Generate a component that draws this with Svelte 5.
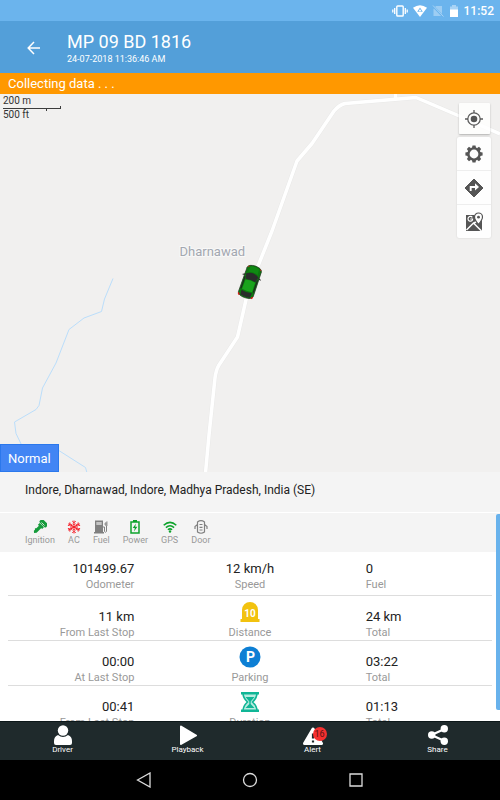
<script>
  const rows = [
    { left: ['11 km', 'From Last Stop'], icon: 'distance', name: 'Distance', right: '24 km' },
    { left: ['00:00', 'At Last Stop'], icon: 'parking', name: 'Parking', right: '03:22' },
    { left: ['00:41', 'From Last Stop'], icon: 'duration', name: 'Duration', right: '01:13' }
  ];
  const sensors = ['Ignition', 'AC', 'Fuel', 'Power', 'GPS', 'Door'];
  const tabs = ['Driver', 'Playback', 'Alert', 'Share'];
</script>

<div class="screen">
  <div class="status">
    <svg width="16" height="12" viewBox="0 0 16 12" fill="none" stroke="#fff">
      <rect x="4.8" y="1" width="6.4" height="10" rx="0.8" stroke-width="1.4" />
      <path d="M2.7 3v6M13.3 3v6M0.8 4.5v3M15.2 4.5v3" stroke-width="1.3" />
    </svg>
    <svg width="14" height="12" viewBox="0 0 14 12">
      <path d="M0 2.8Q7-2.2 14 2.8L7 12Z" fill="#fff" />
      <path d="M7 2.6L9.8 6.8H4.2Z" fill="#6bb4ed" /><circle cx="7" cy="5.4" r="1" fill="#fff" />
    </svg>
    <svg width="12" height="12" viewBox="0 0 12 12">
      <path d="M4 1h6v10H1.5V4Z" fill="#9dcdf3" />
      <path d="M0.5 0.5l10.5 11" stroke="#6bb4ed" stroke-width="2" /><path d="M1 0.5l10.5 11" stroke="#a8d3f5" />
    </svg>
    <svg width="10" height="12" viewBox="0 0 10 12">
      <path d="M3 0h4v1.5h2V5H1V1.5h2Z" fill="#a8d3f5" /><path d="M1 4.5h8V12H1Z" fill="#fff" />
    </svg>
    <time>11:52</time>
  </div>

  <header>
    <button class="back" aria-label="Back">
      <svg width="14" height="14" viewBox="0 0 14 14" fill="none" stroke="#fff" stroke-width="1.5"><path d="M7 1L1.2 7L7 13M1.2 7H13" /></svg>
    </button>
    <div>
      <h1>MP 09 BD 1816</h1>
      <p>24-07-2018 11:36:46 AM</p>
    </div>
  </header>
  <div class="notice">Collecting data . . .</div>

  <main class="map">
    <svg class="ground" viewBox="0 94 500 378" preserveAspectRatio="xMidYMid slice">
      <g fill="none" stroke-linejoin="round">
        <path d="M113 278.500L104.500 299L101.500 311.500L84 318L69 329.500L56 363L42.500 388L39 405.500L36 409.500L14.500 422L16 433.500L24 450L58 450L85.500 467.500L87 473" stroke="#bbdefb" />
        <g id="roads">
          <path d="M205.500 473L209 435L215 378Q216 370 219 365L237.500 337L248 291L272 231L297 161L312 143.500L334 111Q339 105 345 103.500L416 97.500L457 115L500 134M395.500 93v6" stroke="#e9e9e8" stroke-width="4.500" />
          <path d="M205.500 473L209 435L215 378Q216 370 219 365L237.500 337L248 291L272 231L297 161L312 143.500L334 111Q339 105 345 103.500L416 97.500L457 115L500 134M395.500 93v6" stroke="#fff" stroke-width="3.500" />
        </g>
      </g>
      <text x="179.500" y="256">Dharnawad</text>
      <g transform="translate(250 282) rotate(19)">
        <path d="M-7.500-13Q-7-16.500 0-16.800Q7-16.500 7.500-13L7.800 13Q7 16.300 0 16.500Q-7 16.300-7.800 13Z" fill="#0c780f" stroke="#203a20" stroke-width="0.700" />
        <path d="M-4.500-15Q0-16.500 4.500-15L5-9Q0-11-5-9Z" fill="#0f8a13" />
        <path d="M-6.500-7Q0-11.500 6.500-7L5-1.500Q0-3-5-1.500Z" fill="#292c2b" />
        <path d="M-5-1Q0-2.500 5-1L5.300 9Q0 10-5.300 9Z" fill="#1aa31c" />
        <path d="M-5.500 10Q0 11.500 5.500 10L5 15Q0 16-5 15Z" fill="#292c2b" />
        <path d="M-6.500-4V9M6.500-4V9" stroke="#222" /><path d="M-9.500-5l2.500-1M9.500-5l-2.500-1" stroke="#222" />
        <path d="M-7.500 13.500l1 2M7.500 13.500l-1 2" stroke="#e21818" stroke-width="1.500" />
        <path d="M-7-14l1.500-1M7-14l-1.500-1" stroke="#a33418" />
      </g>
    </svg>
    <div class="scale">
      <span>200 m</span>
      <svg width="58" height="6" viewBox="0 0 58 6" fill="none" stroke="#3c3c3c"><path d="M0 3.500H57.500M57.500 1v3M43.500 3v3" /></svg>
      <span>500 ft</span>
    </div>
    <div class="tools">
      <button class="locate" aria-label="My location">
        <svg width="18" height="18" viewBox="0 0 18 18" fill="none" stroke="#5c5c5c" stroke-width="1.300"><circle cx="9" cy="9" r="6.200" /><circle cx="9" cy="9" r="3.300" fill="#555" stroke="none" /><path d="M9 0v3M9 15v3M0 9h3M15 9h3" /></svg>
      </button>
      <div class="group">
        <button aria-label="Settings">
          <svg width="18" height="18" viewBox="-9 -9 18 18" fill="#555">
            <circle r="5.600" fill="none" stroke="#555" stroke-width="2.400" />
            {#each [0, 45, 90, 135, 180, 225, 270, 315] as turn}
              <path d="M-2-6L-1.500-8.600H1.500L2-6Z" transform={`rotate(${turn})`} />
            {/each}
          </svg>
        </button>
        <button aria-label="Directions">
          <svg width="20" height="20" viewBox="0 0 20 20"><path d="M10 1L19 10L10 19L1 10Z" fill="#555" stroke="#555" stroke-linejoin="round" /><path d="M6.700 13V9H12" fill="none" stroke="#fff" stroke-width="1.900" /><path d="M11 5.300L15 9L11 12.500Z" fill="#fff" /></svg>
        </button>
        <button aria-label="Open in maps">
          <svg width="18" height="20" viewBox="0 0 18 20">
            <path d="M1 3H17V19H1Z" fill="#555" />
            <path d="M1.500 18L8.500 11L16.500 19M9 11L13.500 8.500" fill="none" stroke="#fff" stroke-width="1.500" />
            <path d="M7.300 5.300A2.400 2.400 0 1 0 7.500 8V7H5.200" fill="none" stroke="#fff" stroke-width="1.200" />
            <path d="M13.500 12.500Q9.500 7.800 9.500 5A4 4 0 0 1 17.500 5Q17.500 7.800 13.500 12.500Z" fill="#fff" stroke="#555" stroke-width="1.200" /><circle cx="13.500" cy="5.200" r="1.400" fill="#555" />
          </svg>
        </button>
      </div>
    </div>
    <button class="mode">Normal</button>
  </main>

  <section class="panel">
    <p class="address">Indore, Dharnawad, Indore, Madhya Pradesh, India (SE)</p>
    <ul class="sensors">
      {#each sensors as sensor}
        <li>
          {#if sensor === 'Ignition'}
            <svg width="14" height="14" viewBox="0 0 14 14"><g transform="translate(9.500 4.500) rotate(45)" fill="#159b3b"><rect x="-4.500" y="-4" width="9" height="4.500" rx="1.200" /><rect x="-3" y="1" width="6" height="2.500" /><path d="M-1.700 3h3.400v7L0 12l-1.700-1.500V9l-1-1l1-1Z" /></g><path d="M8.500 2.500l3 3" stroke="#f4f4f4" stroke-width="0.800" /></svg>
          {:else if sensor === 'AC'}
            <svg class="wide" width="14" height="14" viewBox="-7 -7 14 14" fill="none" stroke="#f51b25" stroke-width="0.900">
              {#each [0, 60, 120, 180, 240, 300] as turn}
                <path d="M0 0V-6.500M-1.800-6L0-4.200L1.800-6M-1.300-3.500L0-2.200L1.300-3.500" transform={`rotate(${turn})`} />
              {/each}
            </svg>
          {:else if sensor === 'Fuel'}
            <svg width="14" height="14" viewBox="0 0 14 14"><path d="M1 0.500H9V12H10V13.500H0V12H1Z" fill="#808080" /><path d="M2.300 2H7.700V5H2.300Z" fill="#c4c4c4" /><path d="M9 7H10.500V11.500Q11.500 13 12.500 11.500V6L10.800 4L12.800 1.500" fill="none" stroke="#808080" /><path d="M10.500 4L13.500 1.500V6H12Z" fill="#999" /></svg>
          {:else if sensor === 'Power'}
            <svg width="14" height="14" viewBox="0 0 14 14"><path d="M3 2H11V13H3Z" fill="none" stroke="#0ea32c" stroke-width="1.500" /><path d="M5 0H9V2H5Z" fill="#0ea32c" /><path d="M8 3.500L4.700 8H6.800L6 11.500L9.400 6.700H7.200Z" fill="#0ea32c" /></svg>
          {:else if sensor === 'GPS'}
            <svg width="14" height="14" viewBox="0 0 14 14" fill="none" stroke="#0ea32c" stroke-width="1.500"><path d="M0.700 5.300Q7-0.500 13.300 5.300M2.900 7.600Q7 4 11.100 7.600M4.900 9.800Q7 8 9.100 9.800" /><circle cx="7" cy="11.500" r="1.200" fill="#0ea32c" stroke="none" /></svg>
          {:else}
            <svg width="14" height="14" viewBox="0 0 14 14" fill="none" stroke="#808080" stroke-width="1.200"><path d="M3.500 2Q7-0.700 10.500 2V12Q7 14.500 3.500 12ZM3.500 4.500L1 6.500V9M10.500 4.500L13 6.500V9" /><path d="M5.500 4.500h3M5.500 7.300h3M5.500 10h3" /></svg>
          {/if}
          <span>{sensor}</span>
        </li>
      {/each}
    </ul>

    <div class="stats">
      <div class="row first">
        <div class="cell left"><strong>101499.67</strong><span>Odometer</span></div>
        <div class="cell mid"><strong>12 km/h</strong><span>Speed</span></div>
        <div class="cell"><strong>0</strong><span>Fuel</span></div>
      </div>
      {#each rows as row}
        <div class="row">
          <div class="cell left"><strong>{row.left[0]}</strong><span>{row.left[1]}</span></div>
          <div class="cell mid">
            {#if row.icon === 'distance'}
              <svg width="22" height="22" viewBox="0 0 22 22"><path d="M3 19V9A8 8 0 0 1 19 9V18H20.500V21H1.500V18H3Z" fill="#f2c20f" /><text x="11" y="15.500" class="glyph ten">10</text></svg>
            {:else if row.icon === 'parking'}
              <svg width="22" height="22" viewBox="0 0 22 22"><circle cx="11" cy="11" r="10.500" fill="#0d7fd4" /><text x="11.500" y="16" class="glyph">P</text></svg>
            {:else}
              <svg width="22" height="22" viewBox="0 0 22 22"><path d="M4 2Q4 7 8.500 11Q4 15 4 20H18Q18 15 13.500 11Q18 7 18 2Z" fill="#b9ece0" stroke="#10b696" stroke-width="1.600" /><path d="M2 1H20V3.500H2ZM2 18.500H20V21H2Z" fill="#10b696" /><path d="M6.500 6H15.500L11.700 10.500V13L15.500 17H6.500L10.300 13V10.500Z" fill="#10b696" /></svg>
            {/if}
            <span>{row.name}</span>
          </div>
          <div class="cell"><strong>{row.right}</strong><span>Total</span></div>
        </div>
      {/each}
    </div>
    <div class="thumb"></div>
  </section>

  <nav class="tabs">
    {#each tabs as tab}
      <button>
        <span class="pic">
          {#if tab === 'Driver'}
            <svg width="20" height="20" viewBox="0 0 20 20" fill="#fff"><circle cx="10" cy="5.500" r="5.200" /><path d="M5 10Q10 14 15 10Q19 11.500 19 16V18Q19 20 17 20H3Q1 20 1 18V16Q1 11.500 5 10Z" /></svg>
          {:else if tab === 'Playback'}
            <svg width="20" height="20" viewBox="0 0 20 20"><path d="M3 1.500L18 10.500L3 19Z" fill="#fff" stroke="#fff" stroke-width="2" stroke-linejoin="round" /></svg>
          {:else if tab === 'Alert'}
            <svg width="20" height="20" viewBox="0 0 20 20"><path d="M10 4L18.500 18.500H1.500Z" fill="#fff" stroke="#fff" stroke-width="3" stroke-linejoin="round" /><path d="M10 8.500v5M10 15.500v2" stroke="#1f2a2c" stroke-width="2.200" /></svg>
            <b>16</b>
          {:else}
            <svg width="20" height="20" viewBox="0 0 20 20" fill="#fff"><path d="M16.500 4L3.500 10L16.500 16" fill="none" stroke="#fff" stroke-width="2.200" /><circle cx="16.300" cy="3.800" r="3.700" /><circle cx="3.700" cy="10" r="3.700" /><circle cx="16.300" cy="16.200" r="3.700" /></svg>
          {/if}
        </span>
        <span>{tab}</span>
      </button>
    {/each}
  </nav>
  <nav class="system">
    <button aria-label="Back"><svg width="16" height="16" viewBox="0 0 16 16"><path d="M1.500 8L14 1V15Z" /></svg></button>
    <button aria-label="Home"><svg width="16" height="16" viewBox="0 0 16 16"><circle cx="8" cy="8" r="6.500" /></svg></button>
    <button aria-label="Recent apps"><svg width="16" height="16" viewBox="0 0 16 16"><path d="M2 2H14V14H2Z" /></svg></button>
  </nav>
</div>

<style>
  :global(body) { margin: 0; }
  .screen { display: flex; flex-direction: column; height: 100vh; overflow: hidden; font-family: Roboto, "Liberation Sans", sans-serif; background: #fff; color: #222; }
  svg { display: block; flex: none; }
  h1, p, ul { margin: 0; padding: 0; font-weight: 400; }
  button { border: 0; padding: 0; margin: 0; background: none; font: inherit; color: inherit; display: flex; align-items: center; justify-content: center; }
  .status { flex: none; height: 21px; padding-right: 6px; display: flex; align-items: center; justify-content: flex-end; gap: 5px; background: #6bb4ed; color: #fff; }
  .status time { font-size: 12px; font-weight: 500; }
  header { flex: none; box-sizing: border-box; height: 52px; padding-top: 2px; display: flex; align-items: center; background: #539fd9; color: #fff; }
  .back { width: 67px; height: 40px; }
  h1 { font-size: 18px; line-height: 22px; }
  header p { font-size: 9px; line-height: 12px; }
  .notice { flex: none; padding: 0 8px; font-size: 13px; line-height: 21px; background: #ff9800; color: #fff; }
  .map { position: relative; flex: 378 1 0; min-height: 0; background: #f1f0ef; }
  .ground { width: 100%; height: 100%; }
  .ground text { font-size: 13px; fill: #a3a7b0; stroke: #f8f8f8; stroke-width: 2px; paint-order: stroke; }
  .scale { position: absolute; left: 3px; top: 1px; font-size: 10px; line-height: 11px; color: #333; }
  .scale span { display: block; }
  .scale svg { margin: -1px 0 -2px; }
  .tools { position: absolute; right: 9px; top: 9px; display: flex; flex-direction: column; align-items: center; gap: 3px; }
  .locate { width: 31px; height: 31px; background: #ffffffd0; box-shadow: 0 1px 2px #0004; border-radius: 1px; }
  .group { background: #fefefe; border-radius: 2px; box-shadow: 0 0 2px #0002; }
  .group button { width: 34px; height: 33px; }
  .group button + button { height: 34px; border-top: 1px solid #eee; }
  .mode { position: absolute; left: 0; bottom: 0; height: 28px; padding: 0 8px; font-size: 13px; color: #fff; background: #4285f4; box-shadow: inset 0 0 0 1px #2b78ec; }
  .panel { position: relative; flex: 249 1 0; min-height: 0; overflow: hidden; display: flex; flex-direction: column; }
  .address { flex: none; padding: 8px 25px 11px; font-size: 12px; line-height: 21px; background: #f4f4f4; border-bottom: 1px solid #fff; }
  .sensors { flex: none; list-style: none; display: flex; gap: 13px; padding: 7px 25px 6px; background: #f4f4f4; }
  .sensors li { display: flex; flex-direction: column; align-items: center; font-size: 9px; line-height: 12px; color: #999; }
  .wide { margin: 0 -1px; }
  .stats { flex: none; padding: 0 8px; }
  .row { height: 43px; padding-bottom: 1px; display: grid; grid-template-columns: repeat(3, 1fr); align-items: end; border-bottom: 1px solid #ddd; }
  .row.first { padding-bottom: 4px; height: 39px; }
  .cell { padding: 0 35px; display: flex; flex-direction: column; }
  .cell.left { align-items: flex-end; }
  .cell.mid { align-items: center; padding: 0; }
  .cell strong { font-size: 13px; font-weight: 400; line-height: 20px; }
  .cell span { font-size: 11px; line-height: 12px; color: #999; }
  .cell svg { margin-bottom: 4px; }
  .glyph { font-size: 14px; font-weight: 700; fill: #fff; text-anchor: middle; }
  .ten { font-size: 10px; }
  .thumb { position: absolute; right: 0; top: 42px; bottom: 11px; width: 4px; border-radius: 2px 0 0 2px; background: #68b2ec; }
  .tabs { flex: none; height: 38px; display: flex; border-top: 1px solid #0c1719; background: #1f2a2c; color: #fff; }
  .tabs button { flex: 1; flex-direction: column; justify-content: flex-start; padding-top: 3px; font-size: 8px; line-height: 10px; }
  .pic { position: relative; }
  .pic b { position: absolute; left: 10px; top: 2px; width: 14px; height: 14px; border-radius: 7px; background: #f5302f; color: #5b1414; font-size: 9px; line-height: 14px; font-weight: 400; }
  .system { flex: none; height: 40px; display: flex; align-items: center; justify-content: center; gap: 90px; background: #000; }
  .system svg { fill: none; stroke: #ddd; stroke-width: 1.3px; }
</style>
